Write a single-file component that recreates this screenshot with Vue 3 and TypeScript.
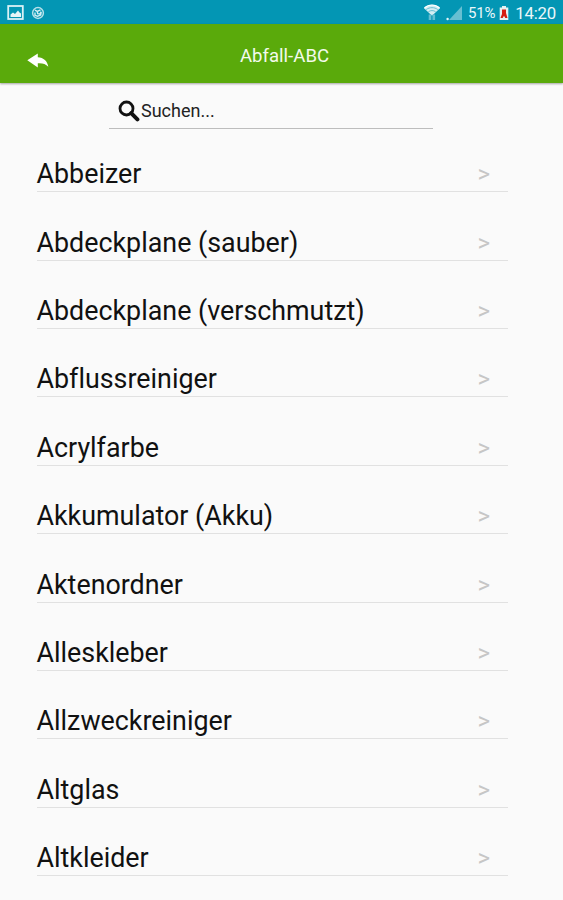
<script setup lang="ts">
import { ref, computed } from 'vue'

const query = ref<string>('')
const entries: string[] = [
  'Abbeizer',
  'Abdeckplane (sauber)',
  'Abdeckplane (verschmutzt)',
  'Abflussreiniger',
  'Acrylfarbe',
  'Akkumulator (Akku)',
  'Aktenordner',
  'Alleskleber',
  'Allzweckreiniger',
  'Altglas',
  'Altkleider',
]
const visible = computed<string[]>(() =>
  entries.filter((e) => e.toLowerCase().includes(query.value.toLowerCase())),
)
</script>

<template>
  <div class="screen">
    <div class="status">
      <div class="group">
        <svg class="pic" width="18" height="16" viewBox="0 0 18 16">
          <rect x="1.2" y="1" width="14.6" height="13" fill="none" stroke="#d9f1f6" stroke-width="1.8" />
          <path d="M3.5 12V9.5L6 7.5l2 1.5 3-3.5 1.5 2 1.5 1V12z" fill="#e4f5f8" />
        </svg>
        <svg class="ball" width="14" height="14" viewBox="0 0 14 14">
          <circle cx="7" cy="7" r="5.4" fill="none" stroke="#b5e0e9" stroke-width="1.5" />
          <path d="M4 4.2l2.2 1.2L9.5 3.8M4 6.5v2.8l2.5.9 3.2-1.1.5-3.3M6.2 5.4l.5 2.2 2.2.4 1.3-2.4" fill="none" stroke="#d4eff4" stroke-width="1.4" />
        </svg>
      </div>
      <div class="group right">
        <svg class="wifi" width="18" height="18" viewBox="0 0 18 18">
          <path d="M1 5.2C5.4.5 12.6.5 17 5.2L9 12.7z" fill="#d4eef3" />
          <path d="M3.2 6.6c3.4-2.6 8.2-2.6 11.6 0M5.4 8.7c2.2-1.5 5-1.5 7.2 0" fill="none" stroke="#4fb3c9" stroke-width=".8" />
          <path d="M1.4 5C5.6 1 12.4 1 16.6 5" fill="none" stroke="#fff" stroke-width="1.2" />
          <path d="M7 11.5V17M10.8 11.5V17" fill="none" stroke="#62bdd1" stroke-width="2.6" />
        </svg>
        <svg class="signal" width="17" height="16" viewBox="0 0 17 16">
          <path d="M16 1v14H3z" fill="#67bfd2" />
          <circle cx="1.6" cy="14" r="1.2" fill="#e4f5f8" />
        </svg>
        <span class="percent">51%</span>
        <svg class="battery" width="10" height="14" viewBox="0 0 10 14">
          <path d="M3 0h4v1.5h2.3V14H.7V1.5H3z" fill="#e5f1f2" />
          <path d="M3 3.5h4V7l1.5 5H6.3L5 9.8 3.7 12H1.5L3 8z" fill="#d51d12" />
        </svg>
        <span class="time">14:20</span>
      </div>
    </div>

    <header class="bar">
      <button class="back" aria-label="Zurück">
        <svg width="22" height="16" viewBox="0 0 22 16">
          <path d="M.3 7.2L10.8.4v3.9c5.8.3 9.6 3.9 10.5 9.5-2.6-2.9-6-3.8-10.5-3.5v4.2z" fill="#fff" />
        </svg>
      </button>
      <h1>Abfall-ABC</h1>
    </header>

    <label class="search">
      <svg width="22" height="22" viewBox="0 0 22 22">
        <circle cx="8.5" cy="8.5" r="6.5" fill="none" stroke="#111" stroke-width="2.8" />
        <path d="M13.2 13.2l6.2 6.2" stroke="#111" stroke-width="4" stroke-linecap="round" />
      </svg>
      <input v-model="query" type="text" placeholder="Suchen..." />
    </label>

    <ul class="list">
      <li v-for="entry in visible" :key="entry" class="row">
        <span class="name">{{ entry }}</span>
        <span class="chevron">&gt;</span>
      </li>
    </ul>
  </div>
</template>

<style>
body {
  margin: 0;
  background: #fafafa;
}
</style>

<style scoped>
.screen {
  height: 900px;
  overflow: hidden;
  background: #fafafa;
  font-family: Roboto, 'Liberation Sans', sans-serif;
  color: #111;
}
.status {
  display: flex;
  justify-content: space-between;
  box-sizing: border-box;
  height: 24px;
  padding: 0 7px;
  background: #0396b4;
  color: #eaf7fa;
}
.group {
  display: flex;
  align-items: center;
  height: 26px;
}
.ball {
  margin-left: 6px;
}
.wifi {
  margin-top: -2px;
}
.signal {
  margin-left: 5px;
}
.percent {
  margin-left: 5px;
  font-size: 15px;
  letter-spacing: -0.2px;
}
.battery {
  margin: 0 6px 0 4px;
}
.time {
  font-size: 16.8px;
  letter-spacing: -0.2px;
}
.bar {
  display: grid;
  grid-template-columns: 76px 1fr 70px;
  align-items: center;
  box-sizing: border-box;
  height: 59px;
  padding-top: 7px;
  background: #5aaa0b;
  box-shadow: 0 1px 2px rgba(0, 0, 0, 0.35);
}
.back {
  display: flex;
  padding: 7px 0 0 27px;
  border: 0;
  background: none;
}
h1 {
  margin: -2px 0 0;
  color: #f3faed;
  font-size: 18.6px;
  font-weight: 400;
  text-align: center;
}
.search {
  display: flex;
  align-items: center;
  box-sizing: border-box;
  width: 324px;
  height: 36px;
  margin: 10px 0 0 109px;
  padding: 1px 0 0 9px;
  border-bottom: 1.5px solid #bdbdbd;
}
.search input {
  flex: 1;
  min-width: 0;
  padding: 0 0 1px 1px;
  border: 0;
  outline: 0;
  background: none;
  font: 18px Roboto, 'Liberation Sans', sans-serif;
}
.search input::placeholder {
  color: #222;
  opacity: 1;
}
.list {
  width: 471px;
  margin: -5.3px 0 0 36.5px;
  padding: 0;
  list-style: none;
}
.row {
  display: flex;
  align-items: flex-end;
  justify-content: space-between;
  box-sizing: border-box;
  height: 68.42px;
  padding: 0 17.5px 1px 0;
  border-bottom: 1px solid #e1e1e1;
}
.name {
  font-size: 26.85px;
  line-height: 32px;
  font-variant-ligatures: none;
}
.chevron {
  color: #c6c6c6;
  font-size: 24px;
  line-height: 31px;
}
</style>
